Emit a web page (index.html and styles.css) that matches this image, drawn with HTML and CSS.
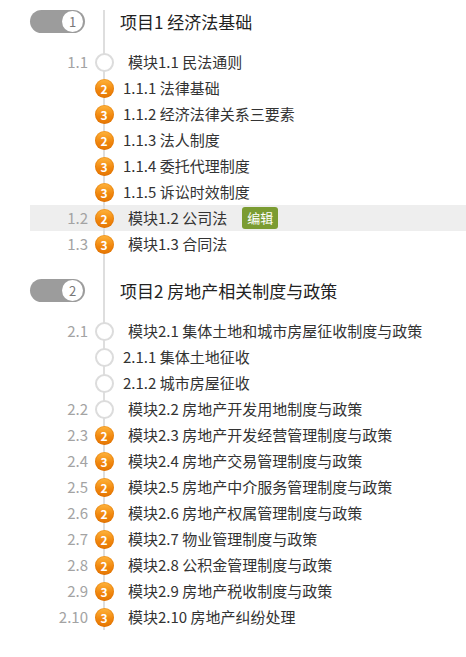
FILE: index.html
```html
<!DOCTYPE html>
<html lang="zh-CN">
<head>
<meta charset="utf-8">
<title>课程目录</title>
<link rel="stylesheet" href="styles.css">
</head>
<body>
<div class="tree">
  <div class="rail"></div>

  <section class="project">
    <div class="project-head">
      <span class="pill"><span class="pill-num">1</span></span>
      <h2 class="project-title">项目1 经济法基础</h2>
    </div>
    <ul class="rows">
      <li class="row module"><span class="no">1.1</span><span class="mark empty"></span><span class="label">模块1.1 民法通则</span></li>
      <li class="row sub"><span class="no"></span><span class="mark orange">2</span><span class="label">1.1.1 法律基础</span></li>
      <li class="row sub"><span class="no"></span><span class="mark orange">3</span><span class="label">1.1.2 经济法律关系三要素</span></li>
      <li class="row sub"><span class="no"></span><span class="mark orange">2</span><span class="label">1.1.3 法人制度</span></li>
      <li class="row sub"><span class="no"></span><span class="mark orange">3</span><span class="label">1.1.4 委托代理制度</span></li>
      <li class="row sub"><span class="no"></span><span class="mark orange">3</span><span class="label">1.1.5 诉讼时效制度</span></li>
      <li class="row module active"><span class="no">1.2</span><span class="mark orange">2</span><span class="label">模块1.2 公司法<span class="edit">编辑</span></span></li>
      <li class="row module"><span class="no">1.3</span><span class="mark orange">3</span><span class="label">模块1.3 合同法</span></li>
    </ul>
  </section>

  <section class="project">
    <div class="project-head">
      <span class="pill"><span class="pill-num">2</span></span>
      <h2 class="project-title">项目2 房地产相关制度与政策</h2>
    </div>
    <ul class="rows">
      <li class="row module"><span class="no">2.1</span><span class="mark empty"></span><span class="label">模块2.1 集体土地和城市房屋征收制度与政策</span></li>
      <li class="row sub"><span class="no"></span><span class="mark empty"></span><span class="label">2.1.1 集体土地征收</span></li>
      <li class="row sub"><span class="no"></span><span class="mark empty"></span><span class="label">2.1.2 城市房屋征收</span></li>
      <li class="row module"><span class="no">2.2</span><span class="mark empty"></span><span class="label">模块2.2 房地产开发用地制度与政策</span></li>
      <li class="row module"><span class="no">2.3</span><span class="mark orange">2</span><span class="label">模块2.3 房地产开发经营管理制度与政策</span></li>
      <li class="row module"><span class="no">2.4</span><span class="mark orange">3</span><span class="label">模块2.4 房地产交易管理制度与政策</span></li>
      <li class="row module"><span class="no">2.5</span><span class="mark orange">2</span><span class="label">模块2.5 房地产中介服务管理制度与政策</span></li>
      <li class="row module"><span class="no">2.6</span><span class="mark orange">2</span><span class="label">模块2.6 房地产权属管理制度与政策</span></li>
      <li class="row module"><span class="no">2.7</span><span class="mark orange">2</span><span class="label">模块2.7 物业管理制度与政策</span></li>
      <li class="row module"><span class="no">2.8</span><span class="mark orange">2</span><span class="label">模块2.8 公积金管理制度与政策</span></li>
      <li class="row module"><span class="no">2.9</span><span class="mark orange">3</span><span class="label">模块2.9 房地产税收制度与政策</span></li>
      <li class="row module"><span class="no">2.10</span><span class="mark orange">3</span><span class="label">模块2.10 房地产纠纷处理</span></li>
    </ul>
  </section>
</div>
</body>
</html>
```

FILE: styles.css
```css
* { box-sizing: border-box; }

html, body {
  margin: 0;
  padding: 0;
  background: #ffffff;
}

body {
  font-family: "Noto Sans CJK SC", "Noto Sans", sans-serif;
  color: #333333;
}

.tree {
  position: relative;
  padding: 10px 0 0 30px;
}

.rail {
  position: absolute;
  left: 103px;
  top: 10px;
  width: 2px;
  height: 627px;
  background: #dedede;
}

.project + .project {
  margin-top: 22px;
}

.project-head {
  display: flex;
  align-items: center;
  height: 23px;
}

.pill {
  position: relative;
  width: 55px;
  height: 23px;
  border-radius: 12px;
  background: #9c9c9c;
  display: flex;
  align-items: center;
  justify-content: flex-end;
  padding-right: 2px;
}

.pill-num {
  width: 21px;
  height: 21px;
  border-radius: 50%;
  background: #ffffff;
  color: #777777;
  font-size: 13px;
  line-height: 21px;
  text-align: center;
}

.project-title {
  margin: 0 0 0 35px;
  font-size: 17px;
  font-weight: normal;
  color: #222222;
  line-height: 23px;
  position: relative;
  z-index: 1;
  background: #ffffff;
}

.rows {
  list-style: none;
  margin: 16px 0 0 0;
  padding: 0;
}

.row {
  display: grid;
  grid-template-columns: 58px 20px 1fr;
  column-gap: 6px;
  align-items: center;
  height: 26px;
  font-size: 15px;
  line-height: 26px;
}

.row.active {
  background: #eeeeee;
}

.no {
  text-align: right;
  color: #a3a3a3;
  font-size: 15px;
}

.mark {
  position: relative;
  z-index: 1;
  width: 19px;
  height: 19px;
  border-radius: 50%;
  justify-self: center;
  font-size: 12px;
  font-weight: bold;
  line-height: 19px;
  text-align: center;
  color: #ffffff;
}

.mark.empty {
  background: #ffffff;
  border: 2px solid #dcdcdc;
}

.mark.orange {
  background: linear-gradient(#ffb53d, #f0850c 60%, #e57705);
  box-shadow: inset 0 0 0 1px rgba(214, 110, 0, 0.35);
}

.label {
  color: #333333;
  white-space: nowrap;
  display: flex;
  align-items: center;
}

.module .label { padding-left: 8px; }
.sub .label { padding-left: 3px; }

.edit {
  display: inline-block;
  margin-left: 15px;
  height: 22px;
  padding: 0 5px;
  border-radius: 3px;
  background: #7b9c32;
  color: #ffffff;
  font-size: 13px;
  line-height: 22px;
}
```
